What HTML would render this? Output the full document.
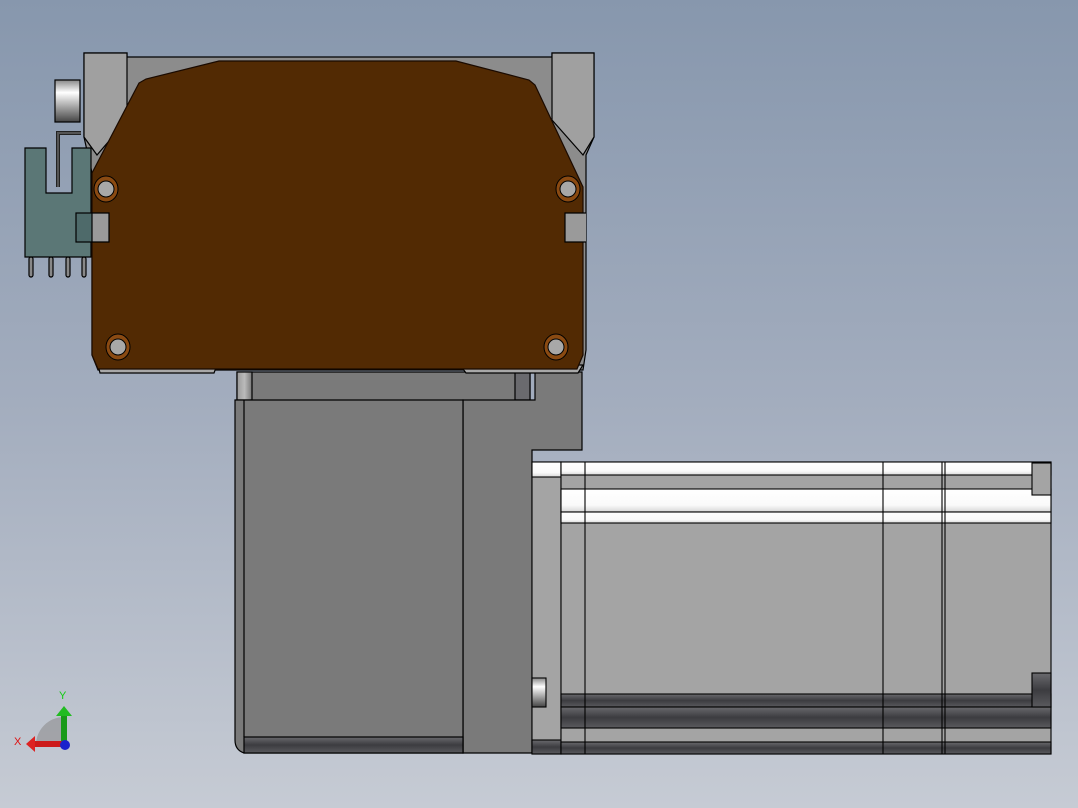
<!DOCTYPE html>
<html><head><meta charset="utf-8"><style>
html,body{margin:0;padding:0;width:1078px;height:808px;overflow:hidden}
body{background:linear-gradient(#8797ad 0%,#a3adbe 50%,#c6cbd4 100%)}
svg{position:absolute;left:0;top:0}
</style></head><body>
<svg width="1078" height="808" viewBox="0 0 1078 808" xmlns="http://www.w3.org/2000/svg">
<defs>
<linearGradient id="dk" x1="0" y1="0" x2="0" y2="1"><stop offset="0" stop-color="#6a6a6e"/><stop offset=".5" stop-color="#3c3c40"/><stop offset="1" stop-color="#5a5a5e"/></linearGradient>
<linearGradient id="wh" x1="0" y1="0" x2="0" y2="1"><stop offset="0" stop-color="#ffffff"/><stop offset=".7" stop-color="#fafafa"/><stop offset="1" stop-color="#d8d8d8"/></linearGradient>
<linearGradient id="knob" x1="0" y1="0" x2="0" y2="1"><stop offset="0" stop-color="#888"/><stop offset=".3" stop-color="#fff"/><stop offset="1" stop-color="#444"/></linearGradient>
<linearGradient id="cyl" x1="0" y1="0" x2="1" y2="0"><stop offset="0" stop-color="#999"/><stop offset=".5" stop-color="#bbb"/><stop offset="1" stop-color="#777"/></linearGradient>
</defs>
<g stroke="#000" stroke-width="1.2">
<polygon points="84,53 127,53 127,57 552,57 552,53 594,53 594,137 586,155 586,350 583,370 98,370 92,355 92,173 84,137" fill="#8c8c8c"/>
<polygon points="84,53 127,53 127,120 97,155 84,137" fill="#a0a0a0"/>
<polygon points="552,53 594,53 594,137 583,155 552,120" fill="#a0a0a0"/>
<rect x="55" y="80" width="25" height="42" fill="url(#knob)"/>
<path d="M58,187 V133 H81" fill="none" stroke="#222" stroke-width="4"/>
<path d="M58,187 V133 H81" fill="none" stroke="#555" stroke-width="2"/>
<path d="M25,148 H46 V193 H72 V148 H91 V257 H25 Z" fill="#5b7776"/>
<g fill="#888"><rect x="29" y="257" width="4" height="20" rx="2"/><rect x="49" y="257" width="4" height="20" rx="2"/><rect x="66" y="257" width="4" height="20" rx="2"/><rect x="82" y="257" width="4" height="20" rx="2"/></g>
<rect x="237" y="372" width="293" height="30" fill="#7a7a7a"/>
<rect x="237" y="372" width="15" height="28" fill="url(#cyl)"/>
<rect x="515" y="372" width="15" height="28" fill="#6a6a6e"/>
<polygon points="530,372 582,372 582,450 532,450 532,753 463,753 463,400 535,400 535,372" fill="#7a7a7a"/>
<polygon points="98,365 217,365 214,373 100,373" fill="#a8a8a8"/>
<polygon points="460,365 583,365 578,373 466,373" fill="#a8a8a8"/>
<path d="M235,400 H463 V753 H244 Q235,750 235,740 Z" fill="#7a7a7a"/>
<line x1="244" y1="400" x2="244" y2="737"/>
<rect x="244" y="737" width="219" height="16" fill="url(#dk)"/>
<polygon points="219,61 456,61 529,80 535,85 583,187 583,355 577,369 98,369 92,355 92,173 139,83 146,79" fill="#522a03" stroke="#1a0a00"/>
<path d="M92,213 H109 V242 H92" fill="#9a9a9a"/>
<path d="M586,213 H565 V242 H586" fill="#9a9a9a"/>
<rect x="76" y="213" width="16" height="29" fill="#4e6a6a"/>
</g>
<g stroke="#000" stroke-width="1">
<ellipse cx="106" cy="189" rx="12" ry="13" fill="#8a4a12"/><ellipse cx="106" cy="189" rx="8" ry="8" fill="#a8a8a8"/>
<ellipse cx="568" cy="189" rx="12" ry="13" fill="#8a4a12"/><ellipse cx="568" cy="189" rx="8" ry="8" fill="#a8a8a8"/>
<ellipse cx="118" cy="347" rx="12" ry="13" fill="#8a4a12"/><ellipse cx="118" cy="347" rx="8" ry="8" fill="#a8a8a8"/>
<ellipse cx="556" cy="347" rx="12" ry="13" fill="#8a4a12"/><ellipse cx="556" cy="347" rx="8" ry="8" fill="#a8a8a8"/>
</g>
<g stroke="#000" stroke-width="1.1">
<rect x="532" y="462" width="29" height="292" fill="#a4a4a4"/>
<rect x="532" y="462" width="29" height="15" fill="url(#wh)"/>
<rect x="532" y="740" width="29" height="14" fill="url(#dk)"/>
<rect x="561" y="462" width="490" height="292" fill="#a4a4a4"/>
<rect x="561" y="462" width="490" height="13" fill="url(#wh)"/>
<rect x="561" y="489" width="490" height="23" fill="url(#wh)"/>
<rect x="561" y="512" width="490" height="11" fill="url(#wh)"/>
<rect x="561" y="694" width="490" height="13" fill="url(#dk)"/>
<rect x="561" y="707" width="490" height="21" fill="url(#dk)"/>
<rect x="561" y="742" width="490" height="12" fill="url(#dk)"/>
<line x1="585" y1="462" x2="585" y2="754"/>
<line x1="883" y1="462" x2="883" y2="754"/>
<line x1="942" y1="462" x2="942" y2="754"/>
<line x1="945" y1="462" x2="945" y2="754"/>
<rect x="1032" y="463" width="19" height="32" fill="#a4a4a4"/>
<rect x="1032" y="673" width="19" height="34" fill="url(#dk)"/>
<rect x="532" y="678" width="14" height="29" fill="url(#knob)"/>
</g>
<path d="M64,745 L64,717 A28,28 0 0 0 36,745 Z" fill="#9a9a9e" opacity=".8"/>
<rect x="61" y="714" width="6" height="31" fill="#1a9a1a"/>
<polygon points="56,716 64,706 72,716" fill="#22bb22"/>
<rect x="33" y="741" width="31" height="6" fill="#cc1a1a"/>
<polygon points="35,736 26,744 35,752" fill="#dd2222"/>
<circle cx="65" cy="745" r="5" fill="#1a22cc"/>
<text x="59" y="699" font-family="Liberation Sans, sans-serif" font-size="11" fill="#11cc11">Y</text>
<text x="14" y="745" font-family="Liberation Sans, sans-serif" font-size="11" fill="#dd1111">X</text>
</svg>
</body></html>
